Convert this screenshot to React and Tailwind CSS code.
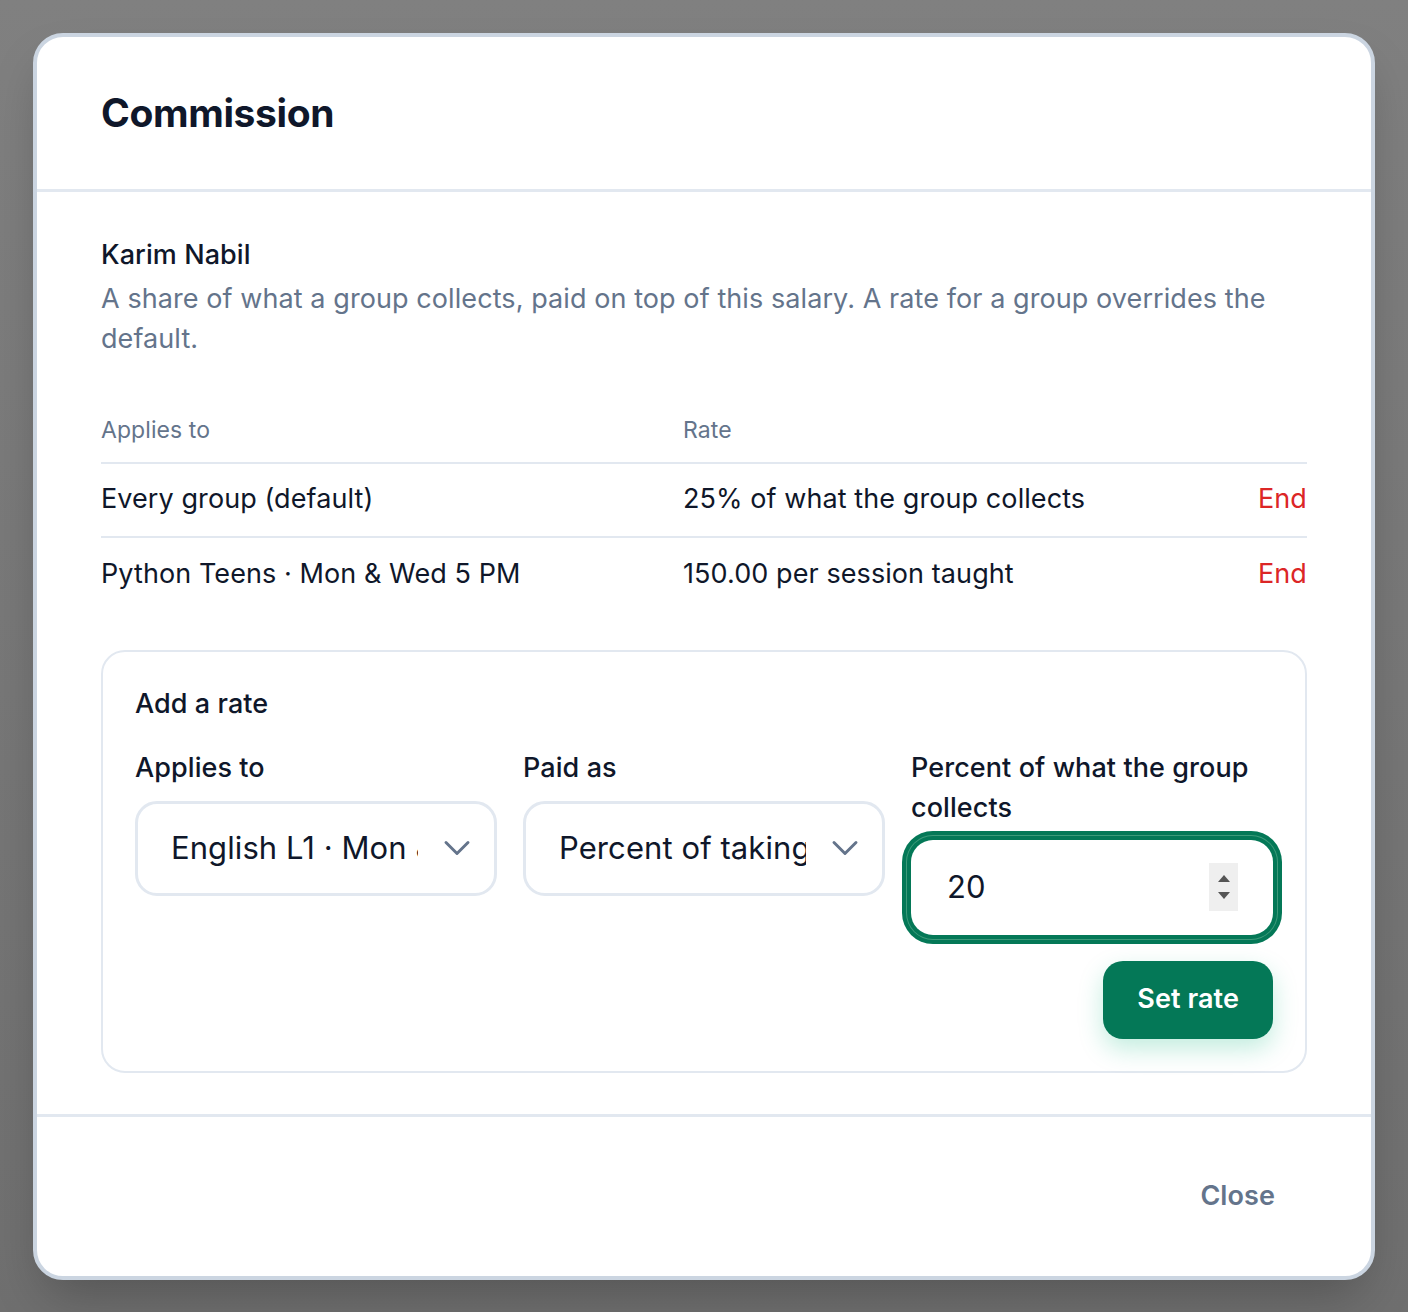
import { ChevronDown } from "lucide-react";

const rates = [
  { target: "Every group (default)", rate: "25% of what the group collects" },
  { target: "Python Teens · Mon & Wed 5 PM", rate: "150.00 per session taught" },
];

function FakeSelect({ value }) {
  return (
    <div className="flex h-[95px] items-center rounded-[22px] border-[3px] border-[#e2e8f0] bg-white pl-[33px]">
      <span className="w-[247px] overflow-hidden whitespace-nowrap text-[31px] text-[#0f172a]">{value}</span>
      <div className="ml-[17px] flex w-[44px] justify-center">
        <ChevronDown size={44} strokeWidth={1.6} className="text-[#64748b]" />
      </div>
    </div>
  );
}

export default function App() {
  return (
    <div
      className="flex min-h-screen items-center justify-center bg-gradient-to-b from-[#808080] to-[#6f6f6f] tracking-[0.005em]"
      style={{ fontFamily: "Inter, 'Noto Sans', sans-serif" }}
    >
      <div className="w-[1342px] overflow-hidden rounded-[30px] border-4 border-[#cbd5e1] bg-white shadow-2xl">
        {/* header */}
        <div className="flex h-[155px] items-center border-b-[3px] border-[#e2e8f0] px-[64px] pt-[2px]">
          <h2 className="text-[39px] font-bold tracking-[-0.01em] text-[#0f172a]">Commission</h2>
        </div>

        {/* body */}
        <div className="px-[64px] pt-[43px] pb-[41px]">
          <p className="text-[27px] font-medium leading-[40px] text-[#0f172a]">Karim Nabil</p>
          <p className="mt-[4px] text-[27px] leading-[40px] text-[#64748b]">
            A share of what a group collects, paid on top of this salary. A rate for a group overrides the default.
          </p>

          <div className="mt-[40px]">
            <div className="grid h-[65px] grid-cols-[582px_1fr] items-center border-b-2 border-[#e2e8f0] text-[23px] text-[#64748b]">
              <span>Applies to</span>
              <span>Rate</span>
            </div>
            {rates.map((r, i) => (
              <div
                key={r.target}
                className={
                  "grid h-[74px] grid-cols-[582px_1fr_auto] items-center text-[27px] text-[#0f172a] " +
                  (i < rates.length - 1 ? "border-b-2 border-[#e2e8f0]" : "")
                }
              >
                <span>{r.target}</span>
                <span>{r.rate}</span>
                <button className="text-[#dc2626]">End</button>
              </div>
            ))}
          </div>

          {/* add a rate */}
          <div className="mt-[38px] rounded-[24px] border-2 border-[#e2e8f0] p-[32px]">
            <p className="text-[27px] font-medium leading-[40px] text-[#0f172a]">Add a rate</p>
            <div className="mt-[24px] grid grid-cols-3 gap-x-[26px]">
              <div>
                <label className="block text-[27px] font-medium leading-[40px] text-[#0f172a]">Applies to</label>
                <div className="mt-[13px]">
                  <FakeSelect value="English L1 · Mon & Wed 7 PM" />
                </div>
              </div>
              <div>
                <label className="block text-[27px] font-medium leading-[40px] text-[#0f172a]">Paid as</label>
                <div className="mt-[13px]">
                  <FakeSelect value="Percent of takings" />
                </div>
              </div>
              <div>
                <label className="block text-[27px] font-medium leading-[40px] text-[#0f172a]">
                  Percent of what the group collects
                </label>
                <div className="mt-[12px] flex h-[95px] items-center rounded-[22px] bg-white pl-[36px] pr-[35px] shadow-[0_0_0_4px_#047857,0_0_0_5px_#3d9a7a,0_0_0_9px_#047857]">
                  <input
                    type="text"
                    readOnly
                    value="20"
                    className="w-full min-w-0 flex-1 bg-transparent text-[31px] text-[#0f172a] outline-none"
                  />
                  <div className="flex h-[48px] w-[29px] flex-col items-center justify-center gap-[10px] bg-[#efefef]">
                    <div className="h-0 w-0 border-x-[6px] border-b-[7px] border-x-transparent border-b-[#555]" />
                    <div className="h-0 w-0 border-x-[6px] border-t-[7px] border-x-transparent border-t-[#555]" />
                  </div>
                </div>
              </div>
            </div>
            <div className="mt-[26px] flex justify-end">
              <button className="h-[78px] rounded-[20px] bg-[#047857] px-[34px] text-[27px] font-semibold text-white shadow-[0_10px_24px_rgba(16,185,129,0.25)]">
                Set rate
              </button>
            </div>
          </div>
        </div>

        {/* footer */}
        <div className="flex h-[162px] items-center justify-end border-t-[3px] border-[#e2e8f0] px-[64px]">
          <button className="px-[32px] text-[27px] font-semibold text-[#64748b]">Close</button>
        </div>
      </div>
    </div>
  );
}
